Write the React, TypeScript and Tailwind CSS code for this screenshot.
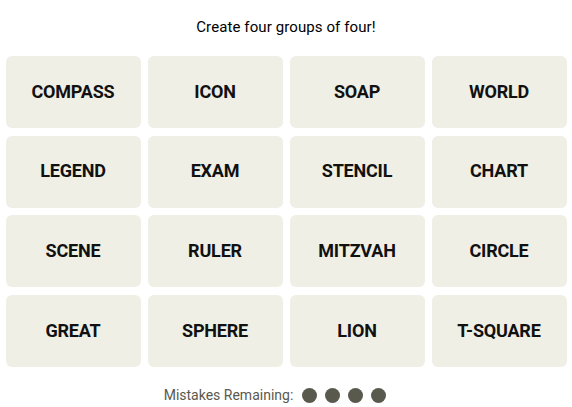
const WORDS = [
  'COMPASS', 'ICON', 'SOAP', 'WORLD',
  'LEGEND', 'EXAM', 'STENCIL', 'CHART',
  'SCENE', 'RULER', 'MITZVAH', 'CIRCLE',
  'GREAT', 'SPHERE', 'LION', 'T-SQUARE',
]

export default function App() {
  return (
    <div className="w-[572px] h-[407px] bg-white flex flex-col items-center" style={{ fontFamily: 'Roboto, "Liberation Sans", sans-serif' }}>
      <p className="mt-[17px] h-[20px] text-[15px] leading-[20px] text-black tracking-[0.1px]">Create four groups of four!</p>
      <div className="mt-[19px] w-[561px] grid grid-cols-4 gap-x-[7px] gap-y-[7.7px]">
        {WORDS.map((w) => (
          <div key={w} className="h-[72px] rounded-md bg-[#efefe6] flex items-center justify-center pb-[2px]">
            <span className="text-[18px] font-bold text-[#111] tracking-[-0.2px]">{w}</span>
          </div>
        ))}
      </div>
      <div className="mt-[18px] mr-[22px] flex items-center gap-[9px]">
        <span className="text-[14px] text-[#5a594e]">Mistakes Remaining:</span>
        <div className="flex gap-[8px]">
          {[0, 1, 2, 3].map((i) => (
            <div key={i} className="w-[15px] h-[15px] rounded-full bg-[#5a594e]" />
          ))}
        </div>
      </div>
    </div>
  )
}
